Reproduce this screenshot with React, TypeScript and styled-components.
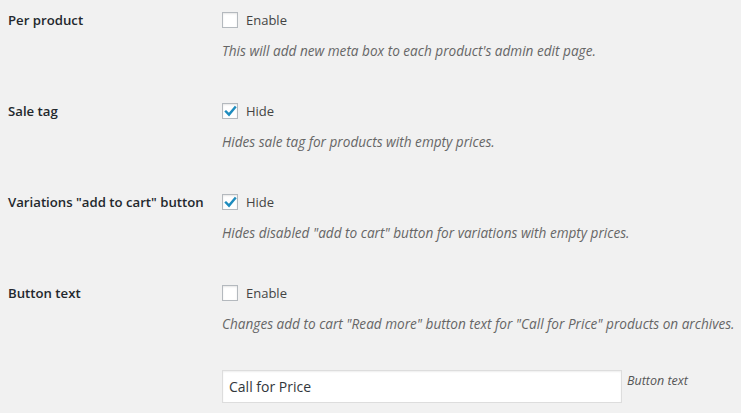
import { createGlobalStyle } from "styled-components";
import styled from "styled-components";

const GlobalStyle = createGlobalStyle`
  html, body {
    margin: 0;
    padding: 0;
    background: #f1f1f1;
  }
  body {
    font-family: "Open Sans", "Noto Sans", "DejaVu Sans", sans-serif;
    color: #444;
  }
`;

const Page = styled.div`
  padding: 10px 0 0 8px;
  width: 733px;
`;

const Row = styled.div`
  display: flex;
  padding-bottom: ${(p) => (p.last ? 0 : 41)}px;
`;

const Label = styled.div`
  width: 214px;
  flex-shrink: 0;
  font-size: 13.2px;
  font-weight: 600;
  line-height: 20px;
  color: #23282d;
`;

const Field = styled.div`
  display: flex;
  flex-direction: column;
`;

const CheckLine = styled.label`
  display: flex;
  align-items: center;
  height: 20px;
  gap: 8px;
  font-size: 13px;
  color: #444;
`;

const Box = styled.span`
  width: 14px;
  height: 14px;
  border: 1px solid #b4b9be;
  background: #fff;
  box-shadow: inset 0 1px 2px rgba(0, 0, 0, 0.1);
  display: flex;
  align-items: center;
  justify-content: center;
`;

const Description = styled.p`
  margin: 12px 0 0;
  font-size: 13.6px;
  line-height: 18px;
  font-style: italic;
  color: #666;
  white-space: nowrap;
`;

const InputLine = styled.div`
  display: flex;
  align-items: flex-start;
  margin-top: 37px;
  gap: 5px;
`;

const TextInput = styled.input`
  box-sizing: border-box;
  width: 400px;
  height: 33px;
  padding: 0 6px;
  border: 1px solid #ddd;
  box-shadow: inset 0 1px 2px rgba(0, 0, 0, 0.07);
  background: #fff;
  font-family: inherit;
  font-size: 14px;
  color: #32373c;
  outline: none;
`;

const InputNote = styled.span`
  font-size: 12.5px;
  font-style: italic;
  color: #555;
  line-height: 18px;
  margin-top: 2px;
`;

function Checkbox({ checked, text }) {
  return (
    <CheckLine>
      <Box>
        {checked && (
          <svg width="13" height="13" viewBox="0 0 13 13">
            <path
              d="M2 6.6 L5 9.6 L11 2.4"
              fill="none"
              stroke="#1e8cbe"
              strokeWidth="2.4"
              strokeLinecap="square"
            />
          </svg>
        )}
      </Box>
      {text}
    </CheckLine>
  );
}

const rows = [
  {
    label: "Per product",
    checked: false,
    text: "Enable",
    desc: "This will add new meta box to each product's admin edit page.",
  },
  {
    label: "Sale tag",
    checked: true,
    text: "Hide",
    desc: "Hides sale tag for products with empty prices.",
  },
  {
    label: 'Variations "add to cart" button',
    checked: true,
    text: "Hide",
    desc: 'Hides disabled "add to cart" button for variations with empty prices.',
  },
];

export default function App() {
  return (
    <>
      <GlobalStyle />
      <Page>
        {rows.map((r) => (
          <Row key={r.label}>
            <Label>{r.label}</Label>
            <Field>
              <Checkbox checked={r.checked} text={r.text} />
              <Description>{r.desc}</Description>
            </Field>
          </Row>
        ))}
        <Row last>
          <Label>Button text</Label>
          <Field>
            <Checkbox checked={false} text="Enable" />
            <Description>
              Changes add to cart "Read more" button text for "Call for Price"
              products on archives.
            </Description>
            <InputLine>
              <TextInput defaultValue="Call for Price" />
              <InputNote>Button text</InputNote>
            </InputLine>
          </Field>
        </Row>
      </Page>
    </>
  );
}
